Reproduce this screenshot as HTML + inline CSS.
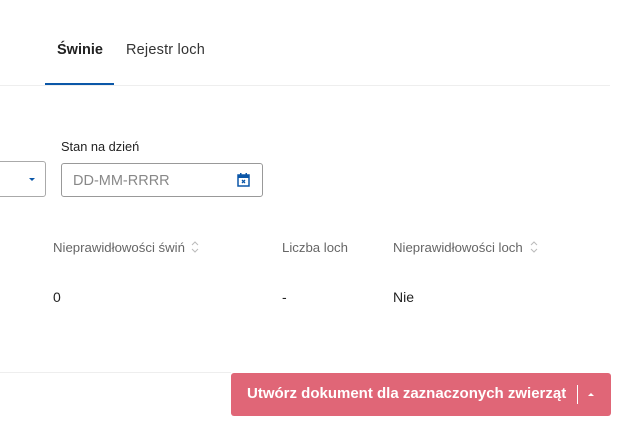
<!DOCTYPE html>
<html><head><meta charset="utf-8"><style>
body{margin:0;width:632px;height:430px;background:#fff;font-family:"Liberation Sans",sans-serif;position:relative;overflow:hidden;color:#222}
.a{position:absolute;white-space:nowrap}
</style></head><body>
<div class="a" style="left:57px;top:42px;font-size:14.5px;font-weight:bold;color:#222">Świnie</div>
<div class="a" style="left:126px;top:42px;font-size:14.5px;color:#333;letter-spacing:0.2px">Rejestr loch</div>
<div class="a" style="left:0;top:85px;width:610px;height:1px;background:#eee"></div>
<div class="a" style="left:45px;top:83px;width:69px;height:2px;background:#0b57a8"></div>
<div class="a" style="left:61px;top:139px;font-size:12.8px;color:#222">Stan na dzień</div>
<div class="a" style="left:-6px;top:161px;width:50px;height:34px;border:1px solid #aaa;border-radius:3px"></div>
<div class="a" style="left:29px;top:178px;width:0;height:0;border-left:3px solid transparent;border-right:3px solid transparent;border-top:3px solid #0b57a8"></div>
<div class="a" style="left:61px;top:163px;width:200px;height:32px;border:1px solid #999;border-radius:3px"></div>
<div class="a" style="left:73px;top:173px;font-size:14.5px;color:#888">DD-MM-RRRR</div>
<svg class="a" style="left:237px;top:172px" width="14" height="16" viewBox="0 0 14 16"><rect x="1" y="3" width="11" height="11" fill="none" stroke="#0b57a8" stroke-width="1.5"/><rect x="1" y="3" width="11" height="3" fill="#0b57a8"/><rect x="3" y="1" width="1.5" height="3" fill="#0b57a8"/><rect x="8.5" y="1" width="1.5" height="3" fill="#0b57a8"/><path d="M5 8l3 3M8 8l-3 3" stroke="#0b57a8" stroke-width="1.3"/></svg>
<div class="a" style="left:53px;top:240px;font-size:13.2px;color:#666">Nieprawidłowości świń</div>
<svg class="a" style="left:191px;top:240px" width="8" height="14" viewBox="0 0 8 14"><path d="M1 5l3-3 3 3M1 9l3 3 3-3" fill="none" stroke="#bbb" stroke-width="1"/></svg>
<div class="a" style="left:282px;top:240px;font-size:13.2px;color:#666">Liczba loch</div>
<div class="a" style="left:393px;top:240px;font-size:13.2px;color:#666">Nieprawidłowości loch</div>
<svg class="a" style="left:530px;top:240px" width="8" height="14" viewBox="0 0 8 14"><path d="M1 5l3-3 3 3M1 9l3 3 3-3" fill="none" stroke="#bbb" stroke-width="1"/></svg>
<div class="a" style="left:53px;top:289px;font-size:14px;color:#222">0</div>
<div class="a" style="left:282px;top:289px;font-size:14px;color:#222">-</div>
<div class="a" style="left:393px;top:289px;font-size:14px;color:#222">Nie</div>
<div class="a" style="left:0;top:372px;width:231px;height:1px;background:#eee"></div>
<div class="a" style="left:231px;top:373px;width:380px;height:43px;background:#e06677;border-radius:3px"></div>
<div class="a" style="left:247px;top:385px;font-size:15px;font-weight:bold;color:#fff">Utwórz dokument dla zaznaczonych zwierząt</div>
<div class="a" style="left:577px;top:385px;width:1px;height:19px;background:#fff"></div>
<div class="a" style="left:588px;top:393px;width:0;height:0;border-left:3px solid transparent;border-right:3px solid transparent;border-bottom:3px solid #fff"></div>
</body></html>
